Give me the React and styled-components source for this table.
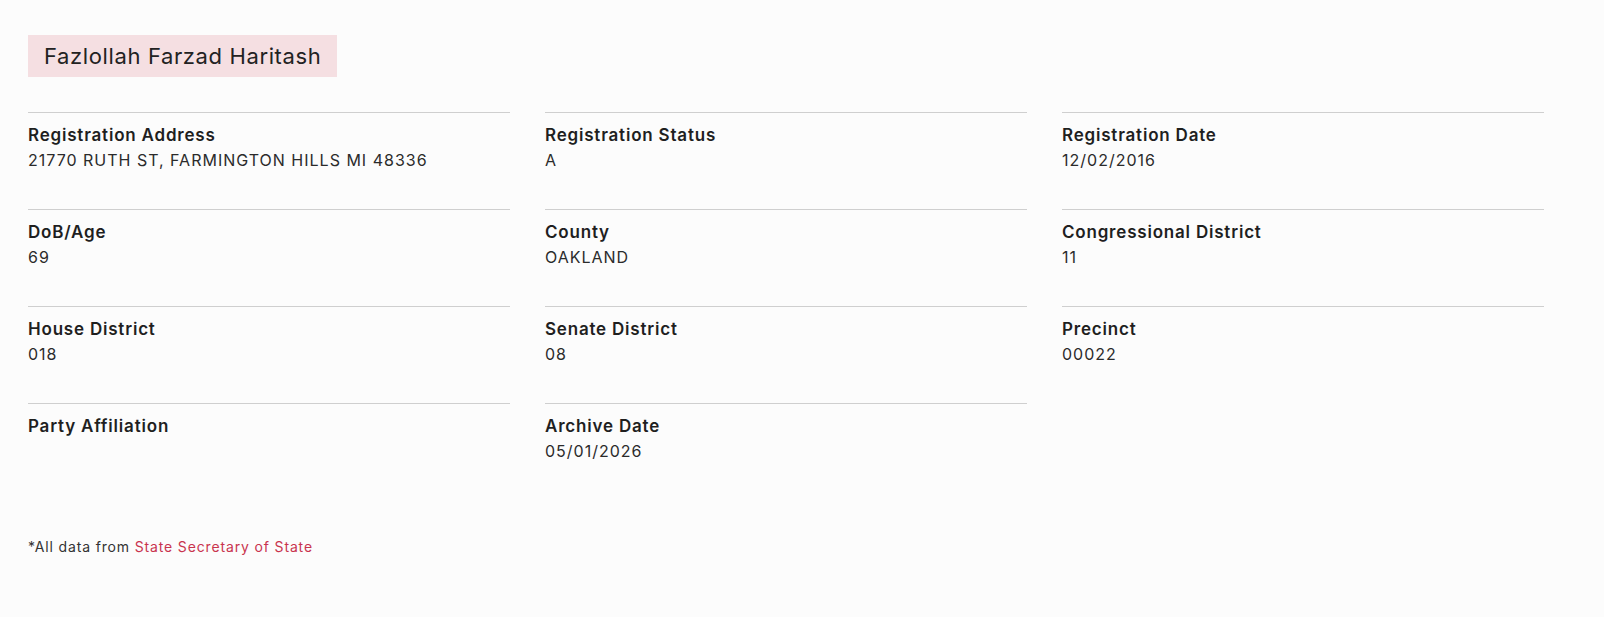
import styled, { createGlobalStyle } from "styled-components"

const GlobalStyle = createGlobalStyle`
    body {
        margin: 0;
        background: #fcfcfc;
        font-family: Inter, "Noto Sans", sans-serif;
        color: #222;
    }
`

const fields = [
    { label: "Registration Address", value: "21770 RUTH ST, FARMINGTON HILLS MI 48336" },
    { label: "Registration Status", value: "A" },
    { label: "Registration Date", value: "12/02/2016" },
    { label: "DoB/Age", value: "69" },
    { label: "County", value: "OAKLAND" },
    { label: "Congressional District", value: "11" },
    { label: "House District", value: "018" },
    { label: "Senate District", value: "08" },
    { label: "Precinct", value: "00022" },
    { label: "Party Affiliation", value: "" },
    { label: "Archive Date", value: "05/01/2026" },
]

export default function App() {
    return (
        <Page>
            <GlobalStyle />
            <NameTag>Fazlollah Farzad Haritash</NameTag>
            <Grid>
                {fields.map(f =>
                    <Cell key={f.label}>
                        <Label>{f.label}</Label>
                        <Value>{f.value}</Value>
                    </Cell>
                )}
            </Grid>
            <Footer>
                *All data from <a href="#">State Secretary of State</a>
            </Footer>
        </Page>
    )
}

const Page = styled.div`
    padding: 35px 28px 40px;
`

const NameTag = styled.div`
    width: fit-content;
    height: 42px;
    line-height: 42px;
    padding: 0 16px;
    background: #f5dfe2;
    font-size: 22px;
    letter-spacing: 0.62px;
    color: #222;
`

const Grid = styled.div`
    margin-top: 35px;
    display: grid;
    grid-template-columns: repeat(3, 482px);
    column-gap: 35px;
`

const Cell = styled.div`
    box-sizing: border-box;
    height: 97px;
    border-top: 1px solid #cfcfcf;
    padding-top: 10px;
`

const Label = styled.div`
    font-size: 17px;
    font-weight: 600;
    line-height: 24px;
    letter-spacing: 0.8px;
    color: #1f1f1f;
`

const Value = styled.div`
    font-size: 16px;
    line-height: 26px;
    letter-spacing: 1px;
    color: #2b2b2b;
`

const Footer = styled.p`
    margin: 37px 0 0;
    font-size: 14px;
    line-height: 20px;
    letter-spacing: 0.85px;
    color: #333;
    a {
        color: #c9344e;
        text-decoration: none;
    }
`
